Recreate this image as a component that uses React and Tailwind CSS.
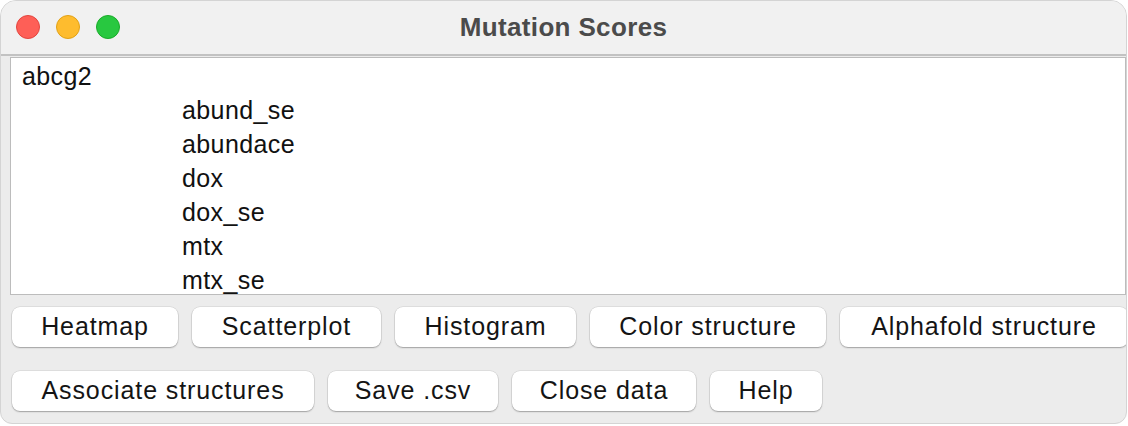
import React from "react";

const items = ["abund_se", "abundace", "dox", "dox_se", "mtx", "mtx_se"];

function Btn({ w, children }) {
  return (
    <div
      className={`${w} h-[40px] shrink-0 flex items-center justify-center rounded-[8px] bg-white text-[25px] tracking-[0.9px] text-[#141414] shadow-[0_1px_1.5px_rgba(0,0,0,0.28),0_0_0_0.5px_rgba(0,0,0,0.12)]`}
    >
      {children}
    </div>
  );
}

export default function App() {
  return (
    <div
      className="w-[1128px] h-[426px] bg-white"
      style={{ fontFamily: '"Liberation Sans", Arial, sans-serif' }}
    >
      <div className="w-[1127px] h-[424px] flex flex-col bg-[#ececec] rounded-t-[16px] rounded-b-[12px] border border-[#d4d4d4] overflow-hidden">
        <div className="relative h-[55px] shrink-0 flex items-center justify-center bg-[#f1f1f1] border-b-2 border-[#c2c2c2]">
          <div className="absolute left-[15px] top-[14px] flex gap-[16px]">
            <div className="w-[24px] h-[24px] rounded-full bg-[#fe5f57] border border-[#e2463f]" />
            <div className="w-[24px] h-[24px] rounded-full bg-[#febc2e] border border-[#e1a116]" />
            <div className="w-[24px] h-[24px] rounded-full bg-[#28c840] border border-[#1aab29]" />
          </div>
          <span className="text-[26px] font-bold text-[#4b4b4b] tracking-[0.35px]">Mutation Scores</span>
        </div>
        <div className="flex flex-col pl-[9px]">
          <div className="mt-[1px] h-[238px] bg-white border border-[#bcbcbc] overflow-hidden pt-[2px] text-[25px] tracking-[0.4px] text-[#111]">
            <div className="h-[34px] flex items-center pl-[11px]">abcg2</div>
            {items.map((t) => (
              <div key={t} className="h-[34px] flex items-center pl-[171px]">
                {t}
              </div>
            ))}
          </div>
          <div className="mt-[12px] pl-[2px] flex gap-[14px]">
            <Btn w="w-[166px]">Heatmap</Btn>
            <Btn w="w-[189px]">Scatterplot</Btn>
            <Btn w="w-[181px]">Histogram</Btn>
            <Btn w="w-[236px]">Color structure</Btn>
            <Btn w="w-[288px]">Alphafold structure</Btn>
          </div>
          <div className="mt-[24px] pl-[2px] flex gap-[14px]">
            <Btn w="w-[302px]">Associate structures</Btn>
            <Btn w="w-[170px]">Save .csv</Btn>
            <Btn w="w-[184px]">Close data</Btn>
            <Btn w="w-[112px]">Help</Btn>
          </div>
        </div>
      </div>
    </div>
  );
}
